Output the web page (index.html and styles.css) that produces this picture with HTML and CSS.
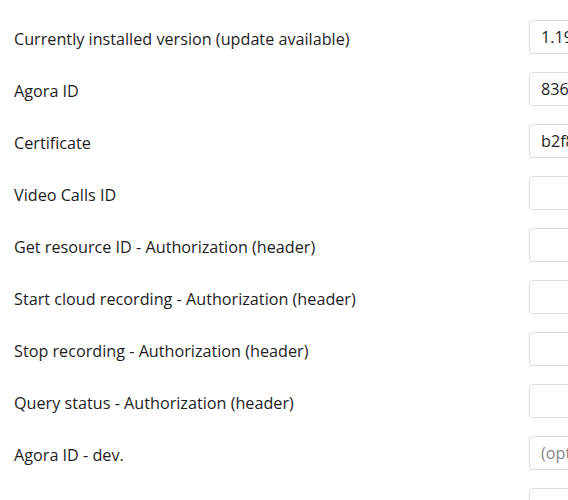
FILE: index.html
```html
<!DOCTYPE html>
<html lang="en">
<head>
  <meta charset="UTF-8">
  <meta name="viewport" content="width=device-width, initial-scale=1.0">
  <title>Agora settings</title>
  <link rel="stylesheet" href="styles.css">
</head>
<body>
  <div class="settings">
    <div class="row">
      <label for="version">Currently installed version (update available)</label>
      <input id="version" type="text" value="1.19.2">
    </div>
    <div class="row">
      <label for="agora-id">Agora ID</label>
      <input id="agora-id" type="text" value="836a9f3c21e04b7d">
    </div>
    <div class="row">
      <label for="certificate">Certificate</label>
      <input id="certificate" type="text" value="b2f8e41d9c3a">
    </div>
    <div class="row">
      <label for="video-id">Video Calls ID</label>
      <input id="video-id" type="text">
    </div>
    <div class="row">
      <label for="resource-auth">Get resource ID - Authorization (header)</label>
      <input id="resource-auth" type="text">
    </div>
    <div class="row">
      <label for="start-auth">Start cloud recording - Authorization (header)</label>
      <input id="start-auth" type="text">
    </div>
    <div class="row">
      <label for="stop-auth">Stop recording - Authorization (header)</label>
      <input id="stop-auth" type="text">
    </div>
    <div class="row">
      <label for="query-auth">Query status - Authorization (header)</label>
      <input id="query-auth" type="text">
    </div>
    <div class="row">
      <label for="agora-dev">Agora ID - dev.</label>
      <input id="agora-dev" type="text" placeholder="(optional)">
    </div>
    <div class="row">
      <label for="cert-dev">Certificate - dev.</label>
      <input id="cert-dev" type="text">
    </div>
  </div>
</body>
</html>
```

FILE: styles.css
```css
html, body {
  overflow: hidden;
}
body {
  font-family: 'Open Sans', sans-serif;
  margin: 0;
  padding: 20px 0 0 14px;
  background-color: #fff;
  color: #1e1e1e;
}
.settings {
  width: 760px;
}
.row {
  display: grid;
  grid-template-columns: 515px 220px;
  align-items: center;
  margin-bottom: 18px;
}
label {
  font-size: 16.2px;
  padding-top: 3px;
}
input {
  box-sizing: border-box;
  height: 34px;
  font-family: 'Open Sans', sans-serif;
  font-size: 16.2px;
  color: #1e1e1e;
  padding: 0 11px;
  border: 1px solid #ddd;
  border-radius: 4px;
  background: #fff;
}
input::placeholder {
  color: #888;
}
```
